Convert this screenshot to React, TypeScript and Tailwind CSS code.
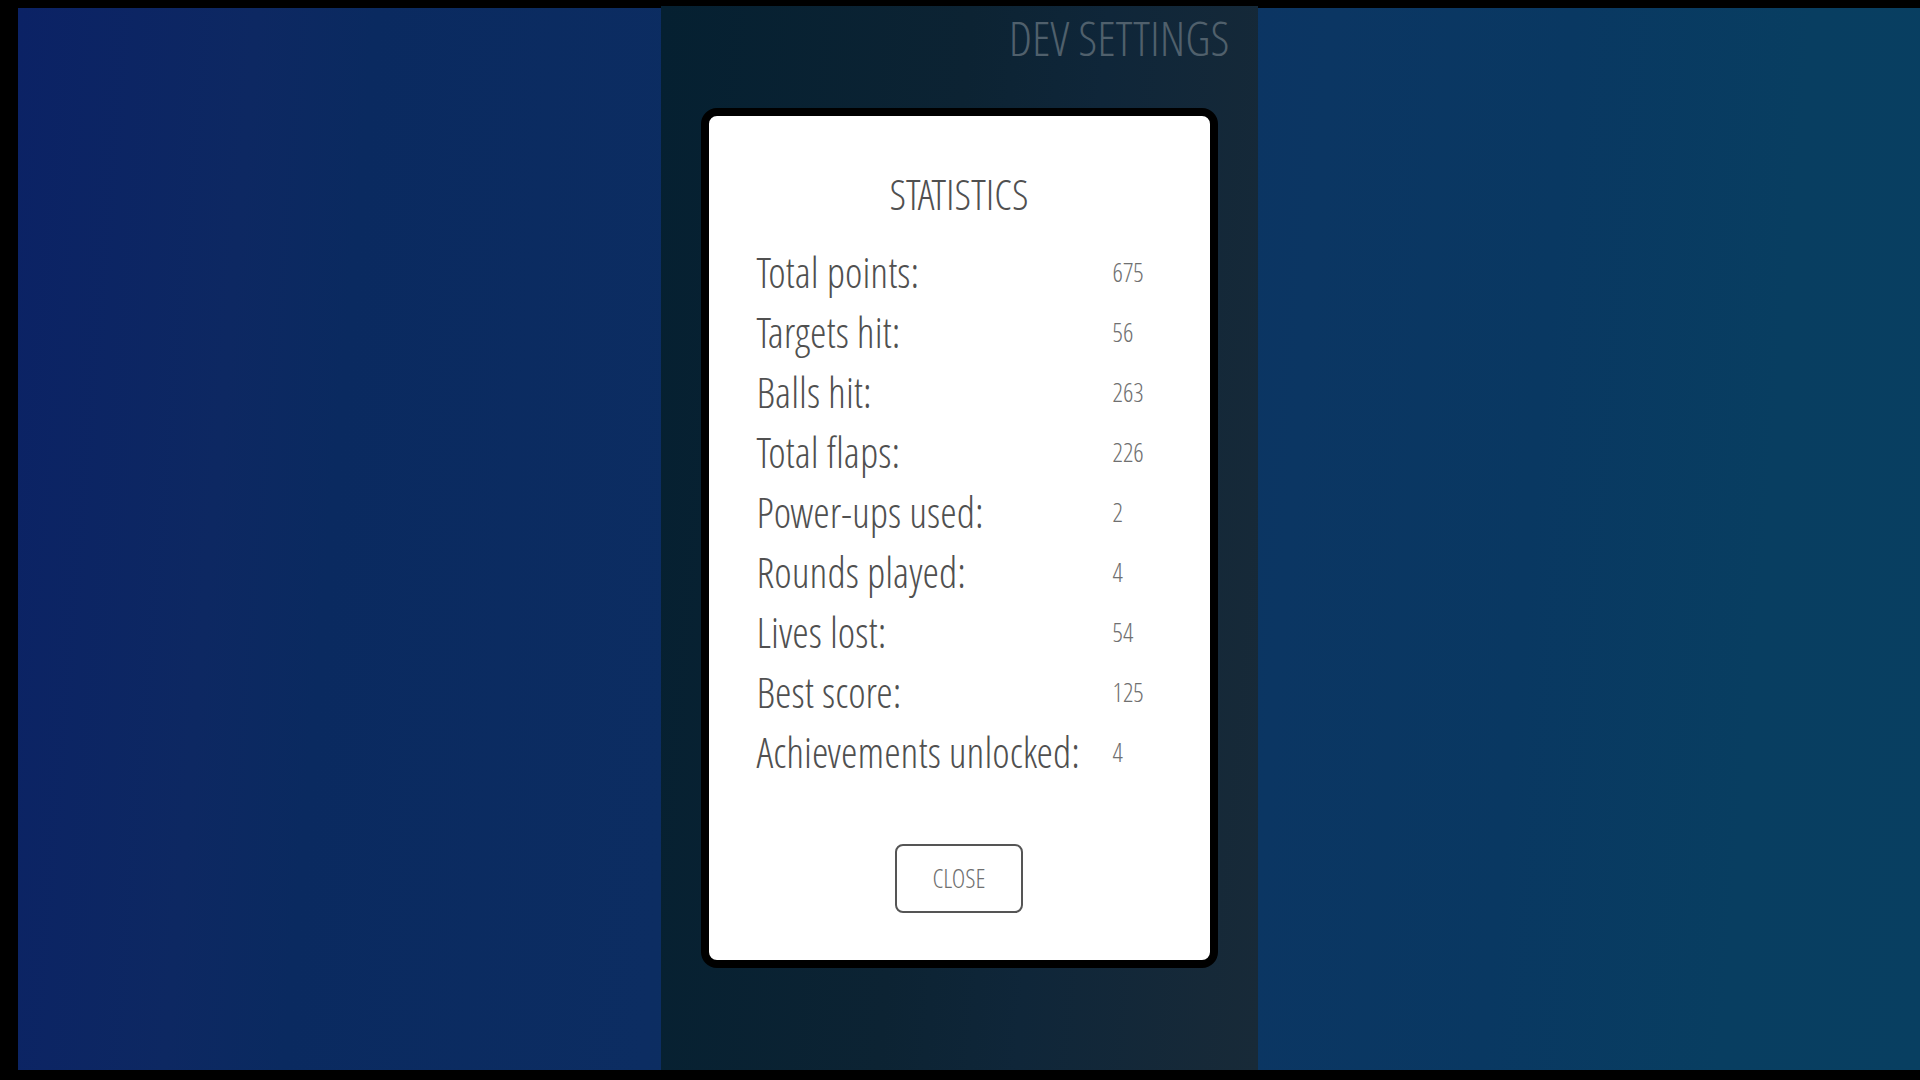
type Stat = { label: string; value: number };

const stats: Stat[] = [
  { label: "Total points:", value: 675 },
  { label: "Targets hit:", value: 56 },
  { label: "Balls hit:", value: 263 },
  { label: "Total flaps:", value: 226 },
  { label: "Power-ups used:", value: 2 },
  { label: "Rounds played:", value: 4 },
  { label: "Lives lost:", value: 54 },
  { label: "Best score:", value: 125 },
  { label: "Achievements unlocked:", value: 4 },
];

function StatisticsDialog() {
  return (
    <section
      role="dialog"
      aria-labelledby="statistics-title"
      className="flex flex-col items-center rounded-2xl border-8 border-black bg-white pt-12 pb-[47px] text-[#505050]"
    >
      <h1 id="statistics-title" className="mb-[18px] text-[42px] leading-[60px]">
        STATISTICS
      </h1>
      <table className="w-full border-collapse text-left">
        <tbody>
          {stats.map((stat) => (
            <tr key={stat.label} className="h-[60px]">
              <th scope="row" className="w-[404px] p-0 pl-12 align-middle text-[42px] leading-[60px] font-normal">
                {stat.label}
              </th>
              <td className="p-0 align-middle text-[26px] leading-[60px] text-[#707070]">{stat.value}</td>
            </tr>
          ))}
        </tbody>
      </table>
      <button
        type="button"
        className="mt-[62px] h-[69px] w-32 rounded-lg border-2 border-[#555555] bg-white text-[26px] text-[#707070]"
      >
        CLOSE
      </button>
    </section>
  );
}

export default function App() {
  return (
    <div className="flex min-h-screen flex-col bg-black pt-2 pb-[10px] pl-[18px] font-['Open_Sans_Condensed_Light','Roboto_Condensed',sans-serif]">
      <div className="flex grow justify-center bg-[linear-gradient(95deg,#0b2265_0%,#0d2862_12%,#0a2a60_18%,#0c2d62_36%,#0b3663_66%,#093862_78%,#083e61_90%,#083f61_100%)] pr-5">
        <main className="-mt-0.5 w-full max-w-[597px] bg-[linear-gradient(95deg,#052031_0%,#0c2333_45%,#0f2639_65%,#182a38_100%)] px-10">
          <header className="flex h-[102px] justify-end">
            <a href="#dev-settings" className="-mr-3 text-5xl leading-[64px] text-[#50606c]">
              DEV SETTINGS
            </a>
          </header>
          <StatisticsDialog />
        </main>
      </div>
    </div>
  );
}
